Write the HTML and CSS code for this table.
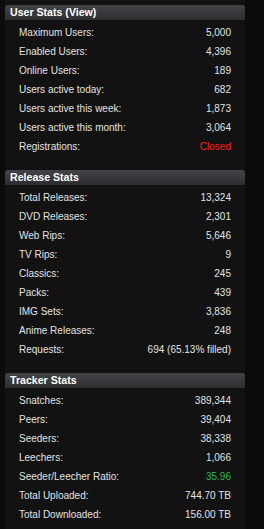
FILE: index.html
```html
<!DOCTYPE html>
<html>
<head>
<meta charset="utf-8">
<link rel="stylesheet" href="styles.css">
</head>
<body>
<div class="sidebar">
  <div class="box">
    <div class="head">User Stats (<a href="#">View</a>)</div>
    <ul class="stats">
      <li><span>Maximum Users:</span><span>5,000</span></li>
      <li><span>Enabled Users:</span><span>4,396</span></li>
      <li><span>Online Users:</span><span>189</span></li>
      <li><span>Users active today:</span><span>682</span></li>
      <li><span>Users active this week:</span><span>1,873</span></li>
      <li><span>Users active this month:</span><span>3,064</span></li>
      <li><span>Registrations:</span><span class="red">Closed</span></li>
    </ul>
  </div>
  <div class="box">
    <div class="head">Release Stats</div>
    <ul class="stats">
      <li><span>Total Releases:</span><span>13,324</span></li>
      <li><span>DVD Releases:</span><span>2,301</span></li>
      <li><span>Web Rips:</span><span>5,646</span></li>
      <li><span>TV Rips:</span><span>9</span></li>
      <li><span>Classics:</span><span>245</span></li>
      <li><span>Packs:</span><span>439</span></li>
      <li><span>IMG Sets:</span><span>3,836</span></li>
      <li><span>Anime Releases:</span><span>248</span></li>
      <li><span>Requests:</span><span>694 (65.13% filled)</span></li>
    </ul>
  </div>
  <div class="box">
    <div class="head">Tracker Stats</div>
    <ul class="stats">
      <li><span>Snatches:</span><span>389,344</span></li>
      <li><span>Peers:</span><span>39,404</span></li>
      <li><span>Seeders:</span><span>38,338</span></li>
      <li><span>Leechers:</span><span>1,066</span></li>
      <li><span>Seeder/Leecher Ratio:</span><span class="green">35.96</span></li>
      <li><span>Total Uploaded:</span><span>744.70 TB</span></li>
      <li><span>Total Downloaded:</span><span>156.00 TB</span></li>
    </ul>
  </div>
</div>
</body>
</html>
```
FILE: styles.css
```css
html, body {
  margin: 0;
  padding: 0;
  background: #0b0b0b;
  height: 100%;
}
body {
  font-family: "Liberation Sans", Arial, sans-serif;
  font-size: 10px;
  color: #e2e2e2;
}
.sidebar {
  margin-left: 5px;
  width: 240px;
  background: #121212;
  min-height: 100%;
  padding-top: 5px;
  box-sizing: border-box;
  overflow: hidden;
}
.box {
  margin-bottom: 9px;
}
.head {
  height: 15px;
  line-height: 15px;
  padding-left: 5px;
  font-weight: bold;
  font-size: 10.6px;
  color: #fff;
  background: linear-gradient(#434447, #2c2d30);
  border-radius: 3px 3px 0 0;
}
.head a {
  color: #fff;
  text-decoration: none;
}
.stats {
  list-style: none;
  margin: 0;
  padding: 3px 14px 5px 14px;
}
.stats li {
  display: flex;
  justify-content: space-between;
  height: 19px;
  line-height: 19px;
}
.red { color: #ff1a1a; }
.green { color: #2fb84a; }
```
